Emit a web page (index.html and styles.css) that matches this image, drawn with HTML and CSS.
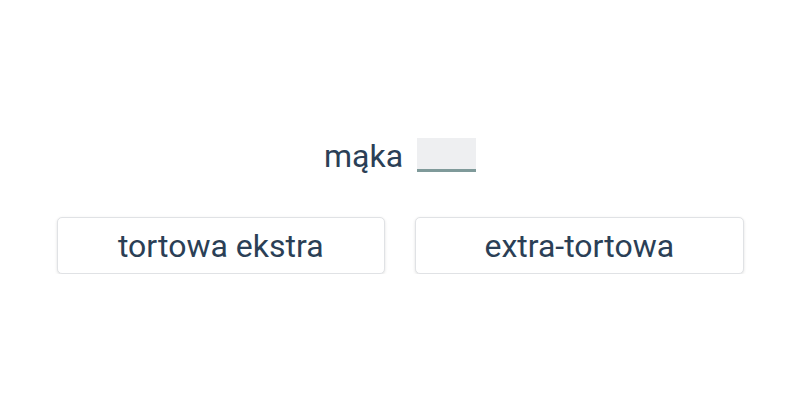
FILE: index.html
```html
<!DOCTYPE html>
<html>
<head>
<meta charset="UTF-8">
<title>Quiz</title>
<link rel="stylesheet" href="styles.css">
</head>
<body>
	<div class="quiz">
		<p class="prompt">mąka <span class="blank"></span></p>
		<div class="answers">
			<button class="answer">tortowa ekstra</button>
			<button class="answer">extra-tortowa</button>
		</div>
	</div>
</body>
</html>
```

FILE: styles.css
```css
body {
	margin: 0;
	background: #ffffff;
	font-family: Roboto, "Liberation Sans", sans-serif;
	color: #2b3f56;
}

.quiz {
	width: 687px;
	margin: 0 auto;
	padding-top: 136px;
}

.prompt {
	margin: 0;
	font-size: 32px;
	line-height: 40px;
	text-align: center;
}

.blank {
	display: inline-block;
	width: 59px;
	height: 31px;
	margin-left: 6px;
	background: #eeeff1;
	border-bottom: 3px solid #7f9a9a;
	vertical-align: -5px;
}

.answers {
	display: flex;
	gap: 30px;
	margin-top: 41px;
}

.answer {
	flex: 1;
	height: 57px;
	background: #ffffff;
	border: 1px solid #e0e2e5;
	border-radius: 5px;
	box-shadow: 0 1px 3px rgba(0, 0, 0, 0.12);
	font-family: Roboto, "Liberation Sans", sans-serif;
	font-size: 32px;
	color: #2b3f56;
}
```
